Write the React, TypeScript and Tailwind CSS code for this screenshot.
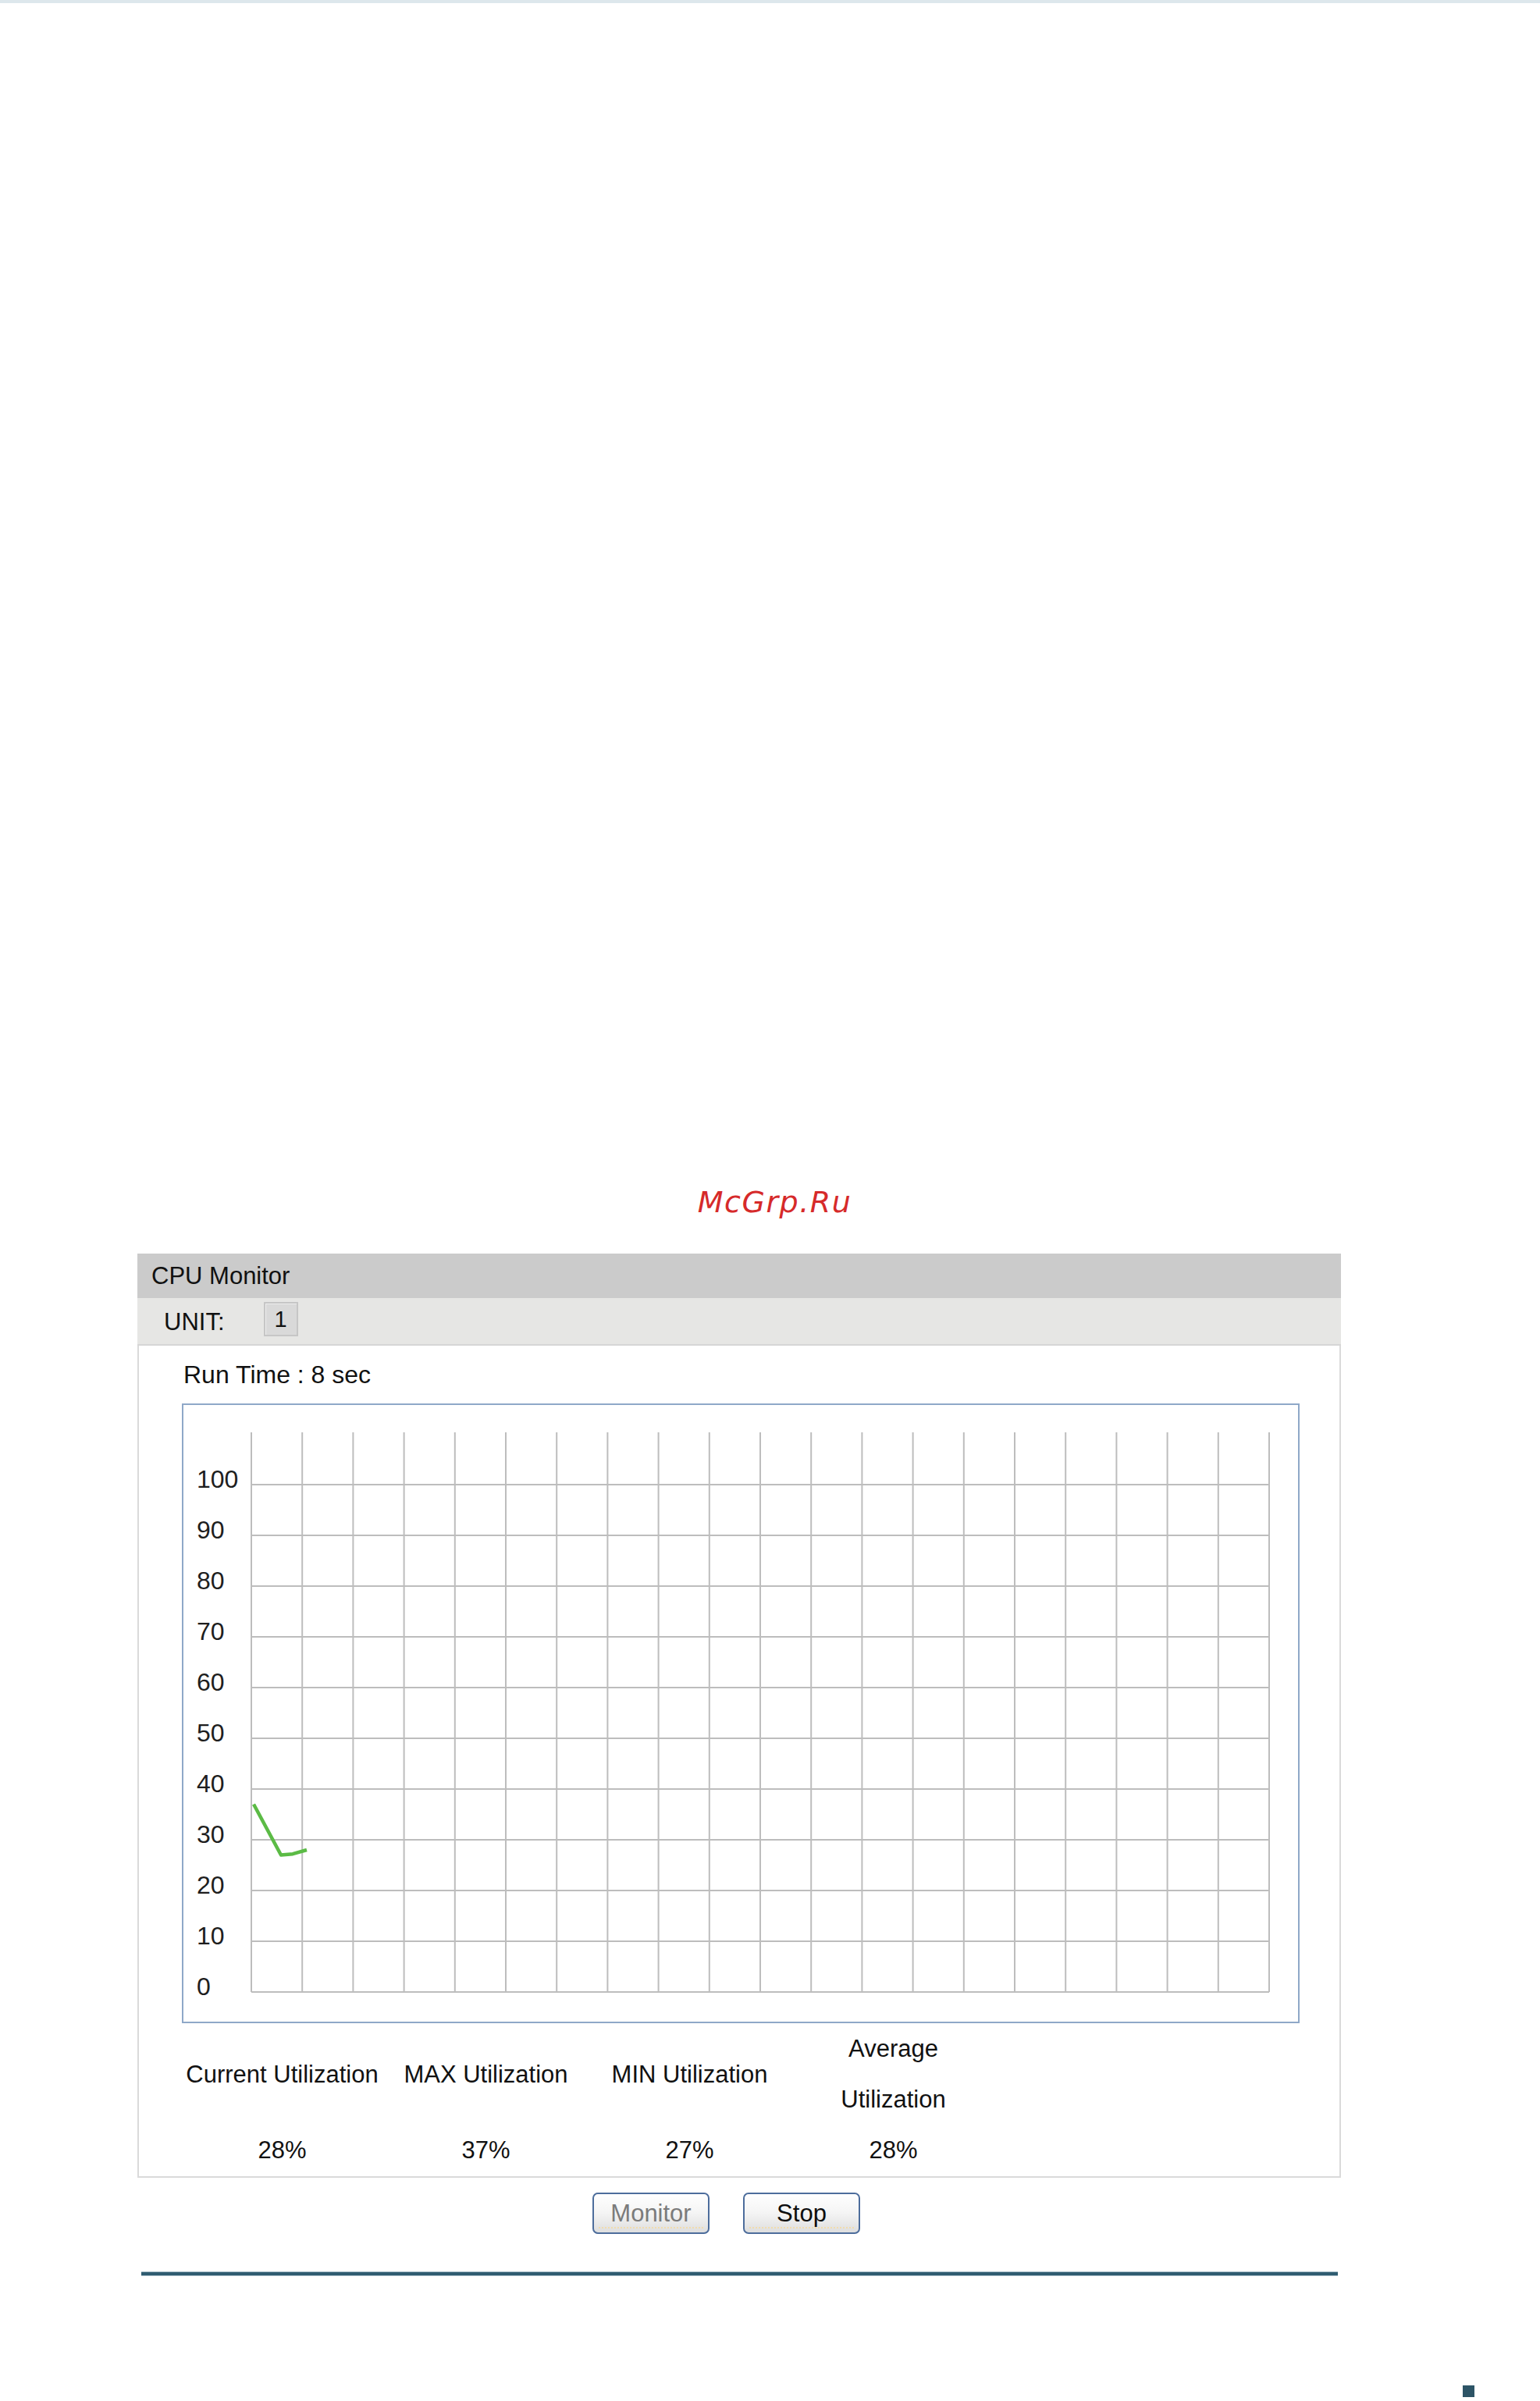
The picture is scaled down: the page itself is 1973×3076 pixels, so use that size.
import React from 'react';

const yLabels = [100, 90, 80, 70, 60, 50, 40, 30, 20, 10, 0];

// 20 columns of 65.2px, 10 rows of 65px
const GRID_LEFT = 87;
const GRID_RIGHT = 1391;
const GRID_TOP = 35;
const ROW0 = 102;
const COL_W = (GRID_RIGHT - GRID_LEFT) / 20;

function valueToY(v: number) {
  return ROW0 + 650 - v * 6.5;
}

function CpuChart() {
  const samples = [
    { x: 90, v: 37 },
    { x: 125, v: 27 },
    { x: 140, v: 27.2 },
    { x: 158, v: 28 },
  ];
  const points = samples.map((s) => `${s.x},${valueToY(s.v)}`).join(' ');

  return (
    <svg width="1428" height="790" viewBox="0 0 1428 790" className="block">
      {/* vertical grid */}
      {Array.from({ length: 21 }).map((_, i) => (
        <line
          key={'v' + i}
          x1={GRID_LEFT + i * COL_W}
          x2={GRID_LEFT + i * COL_W}
          y1={GRID_TOP}
          y2={ROW0 + 650}
          stroke="#bdbdbd"
          strokeWidth="2"
        />
      ))}
      {/* horizontal grid */}
      {yLabels.map((_, j) => (
        <line
          key={'h' + j}
          x1={GRID_LEFT}
          x2={GRID_RIGHT}
          y1={ROW0 + j * 65}
          y2={ROW0 + j * 65}
          stroke="#bdbdbd"
          strokeWidth="2"
        />
      ))}
      {/* y axis labels */}
      {yLabels.map((label, j) => (
        <text
          key={'t' + label}
          x="17"
          y={ROW0 + j * 65 + 4}
          fontSize="32"
          fill="#1e1e1e"
          fontFamily='"Liberation Sans", Arial, sans-serif'
        >
          {label}
        </text>
      ))}
      <polyline points={points} fill="none" stroke="#5bbb45" strokeWidth="4.5" strokeLinejoin="round" />
    </svg>
  );
}

function PanelButton({ label, disabled }: { label: string; disabled?: boolean }) {
  return (
    <button
      type="button"
      className={`relative w-[150px] h-[53px] rounded-[7px] border-2 border-[#4d6d9c] bg-gradient-to-b from-[#ffffff] via-[#f4f4f4] to-[#dedede] text-[31px] leading-none ${
        disabled ? 'text-[#7b7b7b]' : 'text-[#0e0e0e]'
      }`}
    >
      {label}
      <span className="absolute left-[6px] right-[6px] bottom-[5px] border-t-2 border-dotted border-[#f1dcae]" />
    </button>
  );
}

export default function App() {
  const stats = [
    { label: 'Current Utilization', value: '28%' },
    { label: 'MAX Utilization', value: '37%' },
    { label: 'MIN Utilization', value: '27%' },
    { label: 'Average Utilization', value: '28%', wrap: true },
  ];

  return (
    <div className="w-[1973px] h-[3076px] overflow-hidden bg-white font-['Liberation_Sans',Arial,sans-serif] text-[#111111]">
      {/* top strip */}
      <div className="h-[4px] bg-[#dde7ec]" />

      {/* watermark */}
      <div className="mt-[1517px] h-[38px] pl-[12px] text-center font-['DejaVu_Sans',Verdana,sans-serif] italic text-[38px] leading-[38px] tracking-[1.5px] text-[#d62a2a]">
        McGrp.Ru
      </div>

      {/* CPU Monitor panel */}
      <div className="mt-[47px] ml-[176px] w-[1542px]">
        <div className="h-[57px] bg-[#cbcbcb] flex items-center pl-[18px] text-[31px] leading-none">
          CPU Monitor
        </div>
        <div className="h-[61px] bg-[#e6e6e4] border-b-2 border-[#d6d6d6] flex items-start pl-[34px]">
          <span className="mt-[13px] text-[31px] leading-[36px]">UNIT:</span>
          <span className="ml-[50px] mt-[5px] w-[44px] h-[44px] flex items-center justify-center bg-[#d9d9d9] border-2 border-[#c6c6c6] shadow-[inset_1px_1px_0_#ededed] text-[29px] leading-none">
            1
          </span>
        </div>

        <div className="border-x-2 border-b-2 border-[#dadada]">
          <div className="h-[74px] flex items-center pl-[57px] text-[32px] leading-none">
            Run Time : 8 sec
          </div>

          <div className="ml-[55px] w-[1432px] h-[794px] border-2 border-[#8fa8c8]">
            <CpuChart />
          </div>

          <div className="ml-[53px] grid grid-cols-[261px_261px_261px_261px] text-[31px] text-center pb-[1px]">
            {stats.map((s) => (
              <div key={s.label} className="h-[130px] flex items-center justify-center leading-[65px]">
                {s.wrap ? (
                  <span>
                    Average
                    <br />
                    Utilization
                  </span>
                ) : (
                  <span className="whitespace-nowrap">{s.label}</span>
                )}
              </div>
            ))}
            {stats.map((s) => (
              <div key={s.label + '-v'} className="h-[65px] leading-[65px]">
                {s.value}
              </div>
            ))}
          </div>
        </div>
      </div>

      {/* actions */}
      <div className="mt-[19px] ml-[759px] flex gap-[43px]">
        <PanelButton label="Monitor" disabled />
        <PanelButton label="Stop" />
      </div>

      {/* footer rule */}
      <div className="mt-[48px] ml-[181px] w-[1533px] h-[6px] bg-[#2f5c70] border-y border-[#a7bdc7]" />

      <div className="mt-[140px] ml-[1874px] w-[15px] h-[15px] bg-[#2d5466]" />
    </div>
  );
}
